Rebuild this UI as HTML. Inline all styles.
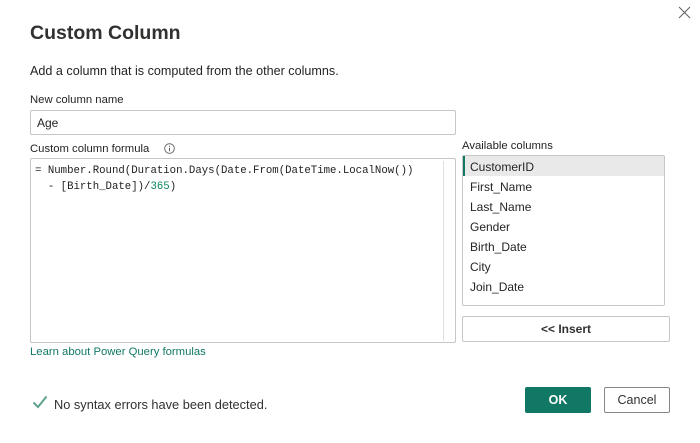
<!DOCTYPE html>
<html><head><meta charset="utf-8"><style>
body{margin:0;width:700px;height:443px;background:#fff;font-family:"Liberation Sans",sans-serif;color:#252423;position:relative;overflow:hidden}
.a{position:absolute;white-space:nowrap}
.box{position:absolute;border:1px solid #c8c6c4;border-radius:2px;box-sizing:border-box;background:#fff}
.mono{font-family:"Liberation Mono",monospace;font-size:10.7px;color:#1e1e1e}
.li{position:absolute;left:7px;font-size:12px}
</style></head><body>
<svg class="a" style="left:678px;top:6px" width="13" height="13" viewBox="0 0 13 13"><path d="M1 1L12 12M12 1L1 12" stroke="#605e5c" stroke-width="1"/></svg>
<div class="a" style="left:30px;top:22px;font-size:19.5px;font-weight:bold;color:#323130">Custom Column</div>
<div class="a" style="left:30px;top:64px;font-size:12.6px">Add a column that is computed from the other columns.</div>
<div class="a" style="left:30px;top:94px;font-size:11.3px">New column name</div>
<div class="box" style="left:30px;top:110px;width:426px;height:25px"><div class="a" style="left:6px;top:5px;font-size:12px">Age</div></div>
<div class="a" style="left:30px;top:143px;font-size:11.3px">Custom column formula</div>
<svg class="a" style="left:164px;top:143px" width="11" height="11" viewBox="0 0 11 11"><circle cx="5.5" cy="5.5" r="4.8" fill="none" stroke="#605e5c" stroke-width="0.9"/><path d="M5.5 4.8V8.2" stroke="#605e5c"/><circle cx="5.5" cy="3.2" r="0.6" fill="#605e5c"/></svg>
<div class="box" style="left:30px;top:158px;width:426px;height:185px">
<div class="a" style="left:412px;top:2px;width:1px;height:180px;background:#e1dfdd"></div>
<div class="a mono" style="left:4px;top:6px">= Number.Round(Duration.Days(Date.From(DateTime.LocalNow())</div>
<div class="a mono" style="left:4px;top:22px">&nbsp;&nbsp;- [Birth_Date])/<span style="color:#098658">365</span>)</div>
</div>
<div class="a" style="left:462px;top:140px;font-size:11.3px">Available columns</div>
<div class="box" style="left:462px;top:155px;width:203px;height:151px">
<div class="a" style="left:0;top:0;width:201px;height:20px;background:#e9e9e9;border-left:2px solid #117865;box-sizing:border-box"></div>
<div class="li" style="top:4px">CustomerID</div>
<div class="li" style="top:24px">First_Name</div>
<div class="li" style="top:44px">Last_Name</div>
<div class="li" style="top:64px">Gender</div>
<div class="li" style="top:84px">Birth_Date</div>
<div class="li" style="top:104px">City</div>
<div class="li" style="top:124px">Join_Date</div>
</div>
<div class="box" style="left:462px;top:316px;width:208px;height:26px;text-align:center;font-size:12px;font-weight:bold;line-height:24px;color:#323130">&lt;&lt; Insert</div>
<div class="a" style="left:30px;top:346px;font-size:11.3px;color:#117865">Learn about Power Query formulas</div>
<svg class="a" style="left:32px;top:395px" width="16" height="14" viewBox="0 0 16 14"><path d="M1.5 7.5L6 12L14.5 1.5" fill="none" stroke="#5fa08e" stroke-width="2"/></svg>
<div class="a" style="left:54px;top:397px;font-size:12.8px;color:#323130">No syntax errors have been detected.</div>
<div class="a" style="left:525px;top:387px;width:66px;height:26px;background:#117865;border-radius:2px;color:#fff;font-weight:bold;font-size:12.5px;text-align:center;line-height:26px">OK</div>
<div class="box" style="left:604px;top:387px;width:66px;height:26px;text-align:center;line-height:24px;font-size:12.5px;color:#323130;border-color:#8a8886">Cancel</div>
</body></html>
